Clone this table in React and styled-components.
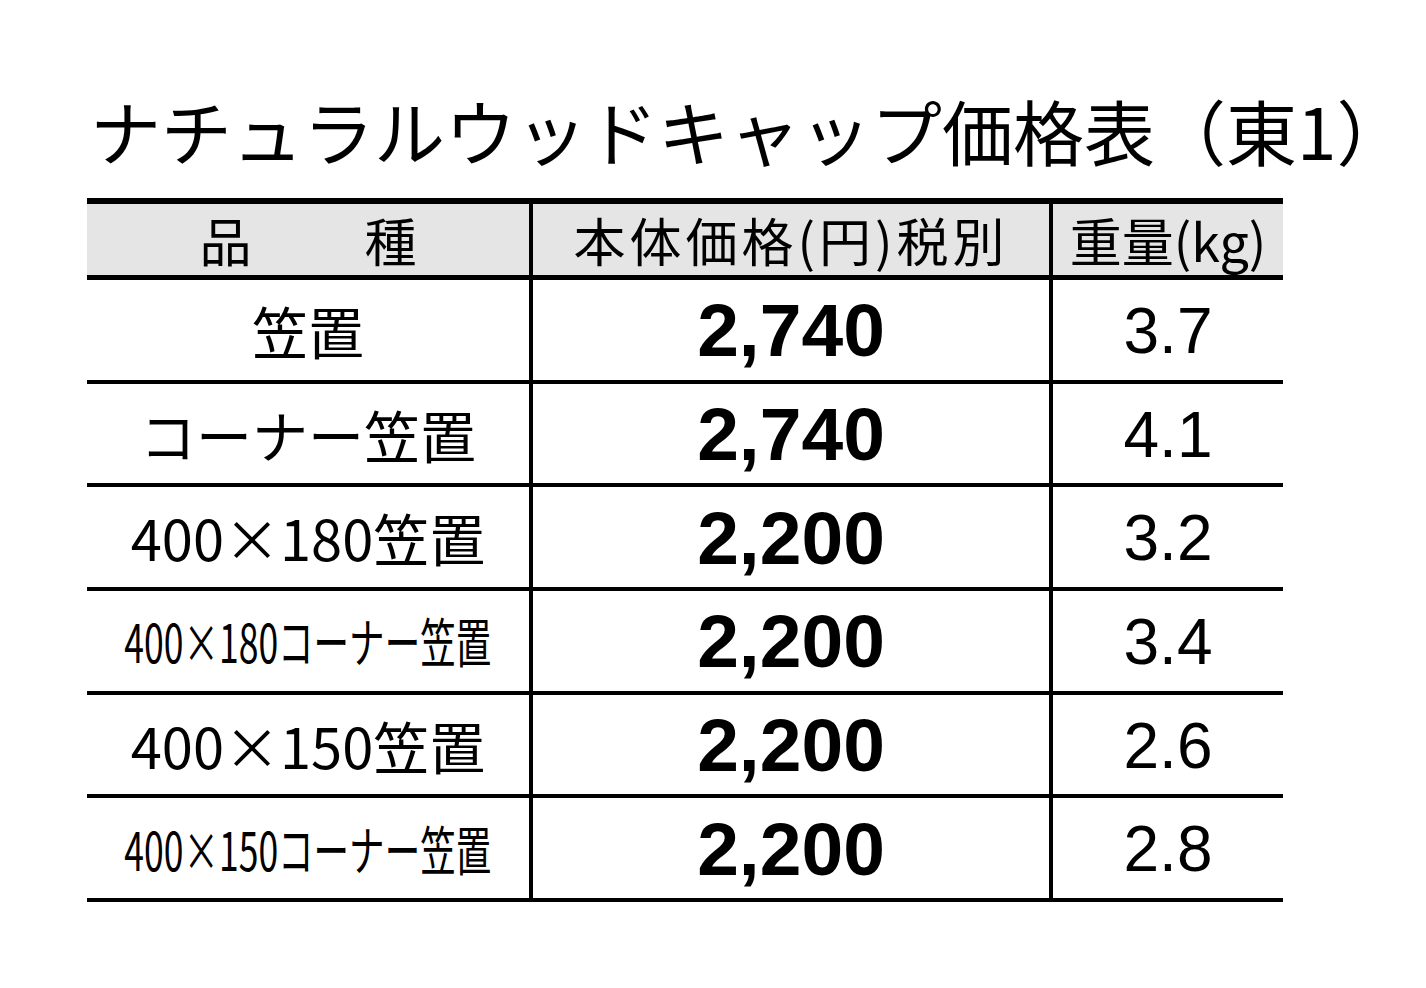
import React from "react";
import styled, { createGlobalStyle } from "styled-components";

const GlobalStyle = createGlobalStyle`
  html, body {
    margin: 0;
    padding: 0;
    background: #fff;
  }
  body {
    font-family: "Noto Sans CJK JP", "Noto Sans", sans-serif;
    color: #000;
  }
`;

const Page = styled.div`
  width: 1426px;
  height: 988px;
  box-sizing: border-box;
  padding: 94px 0 0 87px;
`;

const Title = styled.h1`
  margin: 0 0 33px 0;
  padding-left: 3px;
  font-family: "Noto Sans CJK JP", sans-serif;
  font-weight: 400;
  font-size: 71px;
  line-height: 71px;
  white-space: nowrap;
`;

const Table = styled.div`
  display: grid;
  grid-template-columns: 442px 520px 234px;
  grid-template-rows: 76px repeat(6, 103.7px);
  width: 1196px;
  border-top: 6px solid #000;
`;

const HeadCell = styled.div`
  display: flex;
  align-items: center;
  justify-content: center;
  gap: ${(p) => p.$gap || 0}px;
  box-sizing: border-box;
  background: #e5e5e5;
  border-bottom: 5px solid #000;
  border-left: ${(p) => (p.$first ? "none" : "4px solid #000")};
  font-family: "Noto Sans CJK JP", sans-serif;
  font-size: 52px;
  line-height: 1;
  letter-spacing: ${(p) => p.$spacing || 0}px;
  white-space: nowrap;
`;

const Cell = styled.div`
  display: flex;
  align-items: center;
  justify-content: center;
  box-sizing: border-box;
  border-bottom: 4px solid #000;
  border-left: ${(p) => (p.$first ? "none" : "4px solid #000")};
  overflow: hidden;
`;

const Name = styled.span`
  display: inline-block;
  font-family: "Noto Sans CJK JP", sans-serif;
  font-size: ${(p) => (p.$narrow ? 53 : 56)}px;
  font-weight: 400;
  line-height: 1;
  white-space: nowrap;
  transform: ${(p) => (p.$narrow ? "scaleX(0.67)" : "none")};
`;

const Price = styled.span`
  font-family: "Liberation Sans", Arial, sans-serif;
  font-weight: 700;
  font-size: 75px;
  line-height: 1;
  margin-top: 2px;
`;

const Weight = styled.span`
  font-family: "Liberation Sans", Arial, sans-serif;
  font-size: 64px;
  line-height: 1;
  margin-top: 2px;
`;

const rows = [
  { name: "笠置", price: "2,740", weight: "3.7" },
  { name: "コーナー笠置", price: "2,740", weight: "4.1" },
  { name: "400×180笠置", price: "2,200", weight: "3.2" },
  { name: "400×180コーナー笠置", price: "2,200", weight: "3.4", narrow: true },
  { name: "400×150笠置", price: "2,200", weight: "2.6" },
  { name: "400×150コーナー笠置", price: "2,200", weight: "2.8", narrow: true },
];

export default function App() {
  return (
    <Page>
      <GlobalStyle />
      <Title>ナチュラルウッドキャップ価格表（東1）</Title>
      <Table>
        <HeadCell $first $gap={113}>
          <span>品</span>
          <span>種</span>
        </HeadCell>
        <HeadCell $spacing={4}>本体価格(円)税別</HeadCell>
        <HeadCell>重量(kg)</HeadCell>
        {rows.map((r, i) => (
          <React.Fragment key={i}>
            <Cell $first>
              <Name $narrow={r.narrow}>{r.name}</Name>
            </Cell>
            <Cell>
              <Price>{r.price}</Price>
            </Cell>
            <Cell>
              <Weight>{r.weight}</Weight>
            </Cell>
          </React.Fragment>
        ))}
      </Table>
    </Page>
  );
}
